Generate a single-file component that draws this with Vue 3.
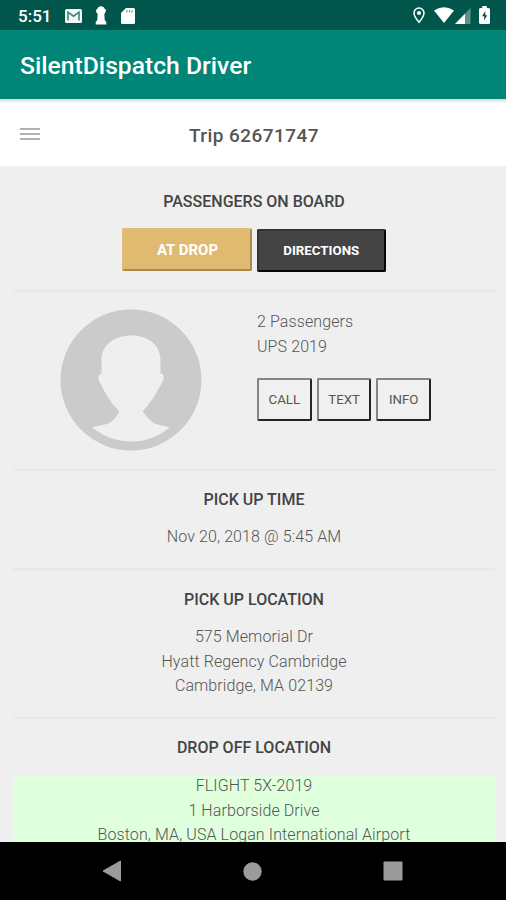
<script setup>
const contactActions = ['CALL', 'TEXT', 'INFO']
const pickup = ['575 Memorial Dr', 'Hyatt Regency Cambridge', 'Cambridge, MA 02139']
const dropoff = ['FLIGHT 5X-2019', '1 Harborside Drive', 'Boston, MA, USA Logan International Airport']
</script>

<template>
  <div class="screen">
    <div class="status">
      <span class="clock">5:51</span>
      <svg class="mail" width="17" height="14" viewBox="0 0 17 14">
        <rect width="17" height="14" rx="1.500" fill="#f4f8f7" />
        <path d="M3 11.500V3.200L8.500 7.200 14 3.200v8.300" fill="none" stroke="#3d7d75" stroke-width="1.500" />
      </svg>
      <svg class="keyhole" width="12" height="19" viewBox="0 0 12 19">
        <path d="M6 .3C8 .3 9 1.300 9.300 2.500 11 3 11.300 4.600 10.500 6c-.5 1-.9 1.500-1.200 2l.5 6.500 1.500 1.300V18.500H.7v-2.700l1.500-1.300L2.700 8C2.200 7.500 1.500 7 1.200 5.800.8 4.300 1.500 3 2.700 2.500 3 1.300 4 .3 6 .3z" fill="#fff" />
      </svg>
      <svg class="card" width="14" height="16" viewBox="0 0 14 16">
        <path d="M5 0h7.500Q14 0 14 1.500v13q0 1.500-1.500 1.500h-11Q0 16 0 14.500V5z" fill="#fff" />
        <path d="M6 2v2.500M8.500 2v2.500M11 2v2.500" stroke="#7aa39d" stroke-width="1.200" />
      </svg>
      <span class="spacer"></span>
      <svg class="pin" width="12" height="17" viewBox="0 0 12 17">
        <path d="M6 1a5 5 0 0 1 5 5c0 3.300-5 9.300-5 9.300S1 9.300 1 6a5 5 0 0 1 5-5z" fill="none" stroke="#fff" stroke-width="1.500" />
        <circle cx="6" cy="6" r="2.100" fill="#fff" />
      </svg>
      <svg class="wifi" width="20" height="16" viewBox="0 0 20 16">
        <path d="M0 3.500Q10-3 20 3.500L10 16z" fill="#fff" />
      </svg>
      <svg class="signal" width="16" height="16" viewBox="0 0 16 16">
        <path d="M15.500 0v16H0z" fill="#5d9189" />
        <path d="M10 5.700V16H0z" fill="#fff" />
      </svg>
      <svg class="battery" width="11" height="18" viewBox="0 0 11 18">
        <path d="M3.200 0h4.600v2H9.500Q11 2 11 3.500v13Q11 18 9.500 18h-8Q0 18 0 16.500v-13Q0 2 1.500 2h1.700z" fill="#fff" />
        <path d="M6.300 5 3 10.200h2.200V14.500l3-5.300H6.300z" fill="#00564a" />
      </svg>
    </div>

    <header class="appbar"><span class="app-name">SilentDispatch Driver</span></header>

    <div class="toolbar">
      <div class="menu"><i></i><i></i><i></i></div>
      <span class="trip">Trip 62671747</span>
    </div>

    <main class="content">
      <section class="board">
        <h2>PASSENGERS ON BOARD</h2>
        <div class="primary-actions">
          <button class="drop">AT DROP</button>
          <button class="directions">DIRECTIONS</button>
        </div>
      </section>

      <section class="passenger">
        <svg class="avatar" width="142" height="142" viewBox="0 0 142 142">
          <circle cx="71" cy="71" r="70.500" fill="#cbcbcb" />
          <path d="M71.500 26.500C54 26.500 42 36 41.500 50v14.500c-2.500.5-3.500 3-3 6C42 78 50 94 59.500 102.500 57 106 55 110 51.500 112.500 47.500 116 38 116.500 32 118.500 43 127 56 132.500 71 132.500S98 128 109.500 118.500c-5-2-12-2-16.500-5C89 111 86 106 82.500 102.500 91 94 99 80 103.500 70.500c.7-3 .2-5.500-3-6V50c-.5-14-12-23.500-29-23.500z" fill="#efefef" />
        </svg>
        <div class="details">
          <p>2 Passengers</p>
          <p>UPS 2019</p>
          <div class="contact">
            <button v-for="a in contactActions" :key="a">{{ a }}</button>
          </div>
        </div>
      </section>

      <section class="time">
        <h2>PICK UP TIME</h2>
        <p class="lines">Nov 20, 2018 @ 5:45 AM</p>
      </section>

      <section class="pickup">
        <h2>PICK UP LOCATION</h2>
        <div class="lines"><p v-for="l in pickup" :key="l">{{ l }}</p></div>
      </section>

      <section class="dropoff">
        <h2>DROP OFF LOCATION</h2>
        <div class="lines highlight"><p v-for="l in dropoff" :key="l">{{ l }}</p></div>
      </section>
    </main>

    <nav class="navbar">
      <svg width="20" height="22" viewBox="0 0 20 22"><path d="M18.500 1v20L1 11z" fill="#9b9b9b" stroke="#9b9b9b" stroke-linejoin="round" /></svg>
      <svg width="19" height="19" viewBox="0 0 19 19"><circle cx="9.500" cy="9.500" r="9.200" fill="#9b9b9b" /></svg>
      <svg width="20" height="20" viewBox="0 0 20 20"><rect x=".5" y=".5" width="19" height="19" rx="1" fill="#9b9b9b" /></svg>
    </nav>
  </div>
</template>

<style>
body { margin: 0; }
</style>

<style scoped>
* { box-sizing: border-box; }
.screen {
  width: 506px;
  height: 900px;
  display: flex;
  flex-direction: column;
  overflow: hidden;
  background: #efefef;
  color: #555;
  font-family: Roboto, "Liberation Sans", sans-serif;
}
.status {
  height: 30px;
  flex: none;
  display: flex;
  align-items: flex-start;
  background: #00564a;
  padding: 0 16px 0 18px;
}
.clock { width: 47px; font-size: 17px; font-weight: 500; line-height: 32px; color: #fff; }
.mail { margin-top: 9px; }
.keyhole { margin: 6px 0 0 13px; }
.card { margin: 8px 0 0 14px; }
.spacer { flex: 1; }
.pin { margin: 7px 9px 0 0; }
.wifi { margin: 7px 1px 0 0; }
.signal { margin: 8px 8px 0 0; }
.battery { margin-top: 6px; }
.appbar {
  height: 69px;
  flex: none;
  display: flex;
  align-items: center;
  background: #008577;
  padding: 2px 20px 0;
}
.app-name { color: #fff; font-size: 24.700px; font-weight: 500; white-space: nowrap; }
.toolbar {
  height: 67px;
  flex: none;
  display: grid;
  grid-template-columns: 100px 1fr 100px;
  align-items: center;
  background: linear-gradient(#cfd5d4, #eaeaea 2px, #fdfdfd 4px, #fff 6px);
  padding: 5px 0 0;
}
.menu { display: flex; flex-direction: column; gap: 3px; padding: 0 0 3px 20px; }
.menu i { width: 20px; height: 2px; background: #b1b1b1; }
.trip { text-align: center; font-size: 19px; font-weight: 500; letter-spacing: 0.450px; color: #555; padding-left: 2px; }
.content { flex: 1; min-height: 0; overflow: hidden; padding: 0 11px 0 13px; }
section { border-bottom: 2px solid #e8e8e8; text-align: center; }
h2 { margin: 0; font-size: 16px; line-height: 20px; font-weight: 500; color: #444; }
p { margin: 0; font-size: 16px; line-height: 24.600px; font-weight: 300; letter-spacing: 0.100px; }
button { font-family: inherit; padding: 0; cursor: pointer; }
.board { height: 126px; padding-top: 26px; }
.primary-actions { display: flex; justify-content: center; gap: 5px; padding-top: 16px; }
.primary-actions button { width: 129.500px; height: 43px; border-radius: 2px; color: #fff; font-weight: 700; }
.primary-actions .drop { background: #dfba70; border: 2px solid; border-color: #e0bd78 #a98b50 #a98b50 #e0bd78; font-size: 15px; padding-left: 1px; }
.primary-actions .directions { margin-top: 1px; background: #444; border: 2px solid; border-color: #333 #080808 #080808 #333; font-size: 13.300px; width: 129px; }
.passenger { height: 179px; display: grid; grid-template-columns: 244px 1fr; text-align: left; }
.avatar { margin: 17px 0 0 47px; }
.details { padding-top: 18px; }
.contact { display: flex; gap: 5px; padding-top: 19px; }
.contact button {
  width: 54.700px;
  height: 43px;
  background: #f0f0f0;
  border: 2px solid;
  border-color: #858585 #242424 #242424 #858585;
  border-radius: 2px;
  color: #555;
  font-size: 13.300px;
  letter-spacing: -0.050px;
}
.time { height: 99px; padding-top: 19px; }
.time .lines, .pickup .lines { padding-top: 15px; }
.pickup { height: 149px; padding-top: 20px; }
.dropoff { padding-top: 19px; }
.highlight { margin-top: 17px; background: #dfffdd; }
.highlight p:first-child { margin-top: -1px; }
.highlight { display: flow-root; }
.navbar {
  height: 58px;
  flex: none;
  display: grid;
  grid-template-columns: 20px 19px 20px;
  justify-content: center;
  column-gap: 121px;
  align-items: center;
  background: #000;
  padding-right: 1px;
}
</style>
